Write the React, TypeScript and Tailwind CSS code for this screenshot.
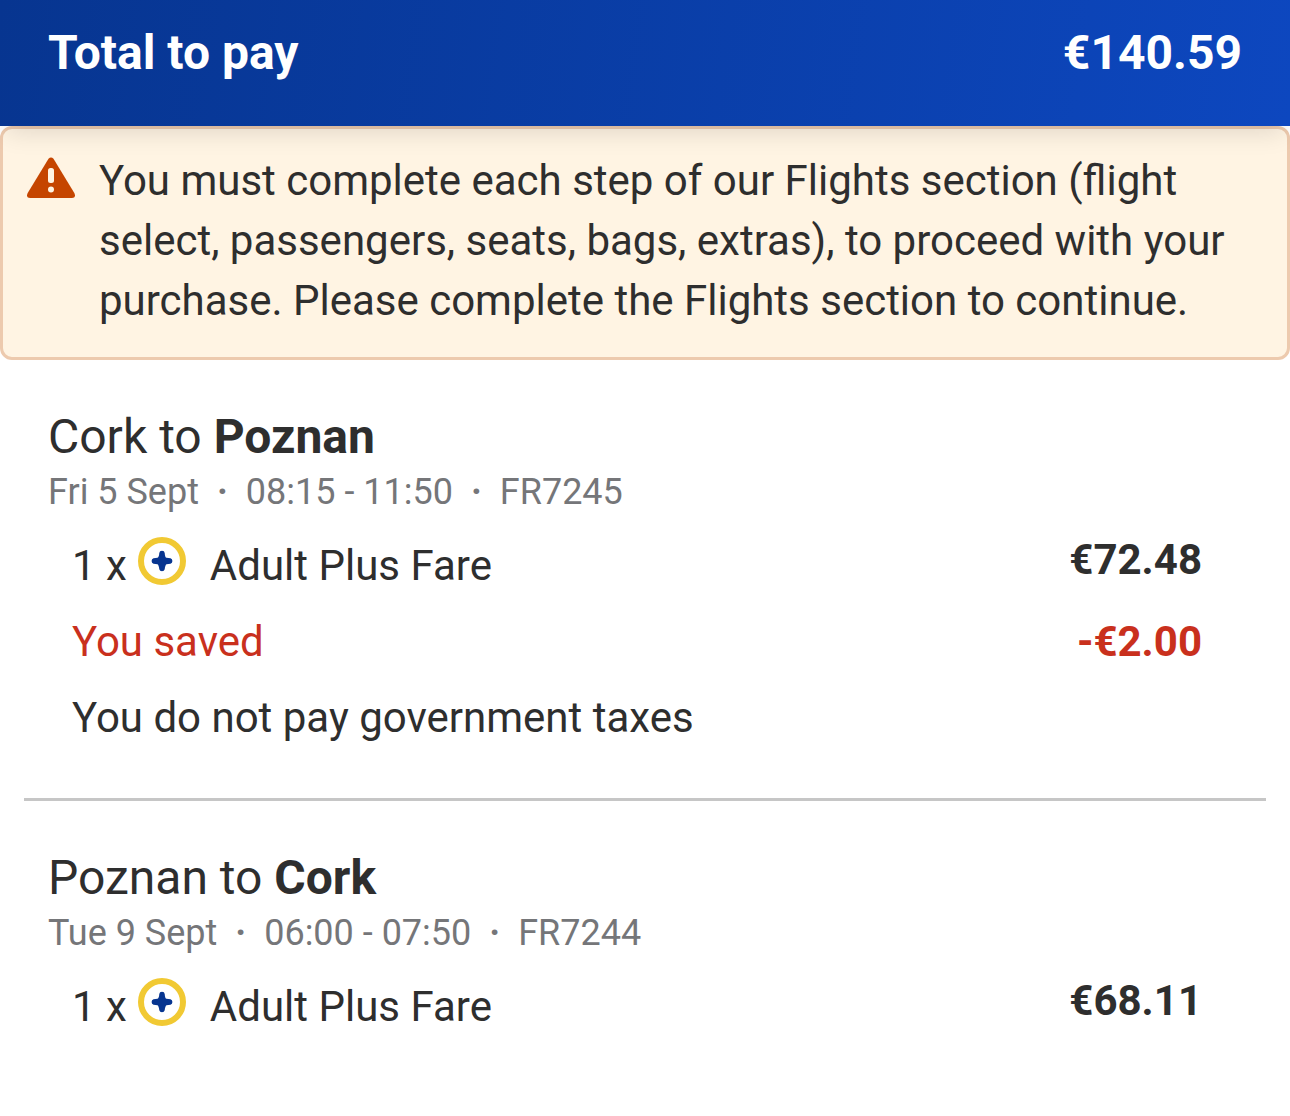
import { Fragment } from "react";

const journeys = [
  {
    id: "outbound",
    from: "Cork",
    to: "Poznan",
    details: ["Fri 5 Sept", "08:15 - 11:50", "FR7245"],
    fare: "€72.48",
    saved: "-€2.00",
    note: "You do not pay government taxes",
  },
  {
    id: "inbound",
    from: "Poznan",
    to: "Cork",
    details: ["Tue 9 Sept", "06:00 - 07:50", "FR7244"],
    fare: "€68.11",
  },
];

function WarningIcon() {
  return (
    <svg viewBox="0 0 48 42" className="h-[42px] w-12" aria-hidden="true">
      <path
        d="M21.5 1.8Q24-1 26.5 1.8L47.300 36Q49.500 41 45 41H3Q-1.500 41 .7 36Z"
        fill="#c54500"
      />
      <rect x="21" y="11" width="6" height="15" rx="2.500" fill="#fff4e3" />
      <circle cx="24" cy="32.500" r="3" fill="#fff4e3" />
    </svg>
  );
}

function PlusFareIcon() {
  return (
    <svg viewBox="0 0 48 48" className="size-12" aria-hidden="true">
      <circle cx="24" cy="24" r="21" fill="#fff" stroke="#f1c933" strokeWidth="6" />
      <path
        d="M21.300 16Q21.500 13.700 24 13.700T26.700 16Q27 20.600 28.500 20.800L32.500 21.300Q34.400 21.700 34.400 24T32.500 26.700L28.500 27.200Q27.200 28 26.700 32.200Q26.300 34.300 24 34.300T21.300 32.200Q20.800 28 19.500 27.200L15.500 26.700Q13.600 26.300 13.600 24T15.500 21.300L19.500 20.800Q21 20.300 21.300 16Z"
        fill="#073590"
      />
    </svg>
  );
}

function Journey({ journey }: { journey: (typeof journeys)[number] }) {
  return (
    <section className="mx-6 border-b-3 border-[#c6c6c6] px-6 pt-[46px] pb-[50px] last:border-b-0">
      <h2 className="text-5xl leading-[62px]">
        {journey.from} to <strong className="font-bold">{journey.to}</strong>
      </h2>
      <p className="flex gap-[18px] text-4xl leading-[48px] text-[#757679]">
        {journey.details.map((detail, i) => (
          <Fragment key={detail}>
            {i > 0 && <span className="font-bold">·</span>}
            <span>{detail}</span>
          </Fragment>
        ))}
      </p>
      <div className="pt-3.5 pr-10 pl-6 text-[42px] leading-[60px]">
        <div className="flex justify-between">
          <div className="flex pt-1.5">
            <span className="mr-[11px]">1 x</span>
            <span className="pt-px">
              <PlusFareIcon />
            </span>
            <span className="ml-6">Adult Plus Fare</span>
          </div>
          <strong className="font-bold">{journey.fare}</strong>
        </div>
        {journey.saved && (
          <div className="mt-4 flex justify-between text-[#c9301d]">
            <span>You saved</span>
            <strong className="font-bold">{journey.saved}</strong>
          </div>
        )}
        {journey.note && <p className="mt-4">{journey.note}</p>}
      </div>
    </section>
  );
}

export default function App() {
  return (
    <main className="min-h-screen bg-white font-['Roboto',sans-serif] text-[#2e2e2e]">
      <header className="relative z-10 flex justify-between bg-linear-98 from-[#073590] to-[#0d47bf] px-12 pt-[23px] pb-[43px] text-5xl leading-[60px] font-bold text-white shadow-[0_12px_24px_-6px_rgba(0,0,0,0.12)]">
        <h1>Total to pay</h1>
        <span>€140.59</span>
      </header>
      <div className="flex gap-6 rounded-xl border-3 border-[#edcaae] bg-[#fff4e3] px-6 pt-[22px] pb-[26px] text-[42px] leading-[60px]">
        <span className="shrink-0 pt-1.5">
          <WarningIcon />
        </span>
        <p>
          You must complete each step of our Flights section (flight select, passengers, seats,
          bags, extras), to proceed with your purchase. Please complete the Flights section to
          continue.
        </p>
      </div>
      {journeys.map((journey) => (
        <Journey key={journey.id} journey={journey} />
      ))}
    </main>
  );
}
